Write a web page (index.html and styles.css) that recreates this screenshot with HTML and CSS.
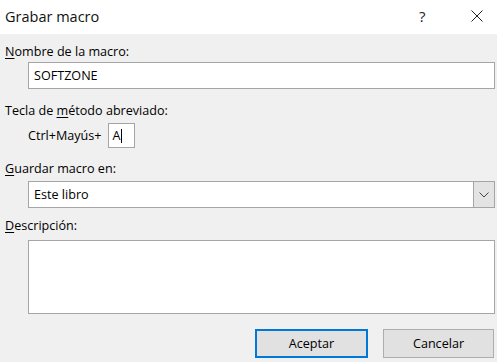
FILE: index.html
```html
<!DOCTYPE html>
<html lang="es">
<head>
<meta charset="utf-8">
<title>Grabar macro</title>
<link rel="stylesheet" href="styles.css">
</head>
<body>
<div class="dialog">
  <div class="titlebar">
    <span class="title">Grabar macro</span>
    <span class="help">?</span>
    <span class="close">
      <svg width="12" height="12" viewBox="0 0 12 12"><path d="M0.5 0.5 L11.5 11.5 M11.5 0.5 L0.5 11.5" stroke="#222" stroke-width="1" fill="none"/></svg>
    </span>
  </div>
  <div class="body">
    <div class="label l1"><u>N</u>ombre de la macro:</div>
    <div class="field input">SOFTZONE</div>
    <div class="label l2">Tecla de <u>m</u>étodo abreviado:</div>
    <div class="shortcut">
      <span class="sc-text">Ctrl+Mayús+</span>
      <span class="keybox">A<span class="caret"></span></span>
    </div>
    <div class="label l3"><u>G</u>uardar macro en:</div>
    <div class="field select">
      <span class="sel-text">Este libro</span>
      <span class="sel-btn">
        <svg width="10" height="6" viewBox="0 0 10 6"><path d="M0.5 0.5 L5 5 L9.5 0.5" stroke="#444" stroke-width="1" fill="none"/></svg>
      </span>
    </div>
    <div class="label l4"><u>D</u>escripción:</div>
    <div class="field textarea"></div>
    <div class="buttons">
      <button class="btn primary">Aceptar</button>
      <button class="btn">Cancelar</button>
    </div>
  </div>
</div>
</body>
</html>
```
FILE: styles.css
```css
html, body {
  margin: 0;
  padding: 0;
}
body {
  background: #f0f0f0;
  font-family: "Open Sans", "Noto Sans", "Liberation Sans", sans-serif;
  color: #000;
  width: 497px;
  height: 362px;
  overflow: hidden;
}
.dialog {
  display: flex;
  flex-direction: column;
}
.titlebar {
  height: 34px;
  background: #fff;
  display: flex;
  align-items: center;
  padding-left: 5px;
}
.title {
  font-size: 14.5px;
  flex: 1;
  color: #111;
  margin-top: -2px;
}
.help {
  font-size: 15px;
  color: #222;
  width: 12px;
  margin-right: 40px;
  margin-top: -2px;
}
.close {
  display: flex;
  width: 12px;
  margin-right: 14px;
  margin-top: -2px;
}
.body {
  display: flex;
  flex-direction: column;
  padding-left: 5px;
  padding-right: 2px;
}
.label {
  font-size: 12.6px;
  line-height: 16px;
  height: 16px;
}
.label u {
  text-decoration-thickness: 1px;
  text-underline-offset: 2px;
}
.l1 { margin-top: 10px; }
.l2 { margin-top: 14px; }
.l3 { margin-top: 13px; }
.l4 { margin-top: 10px; }
.field {
  margin-left: 23px;
  background: #fff;
  border: 1px solid #a5a5a5;
  box-sizing: border-box;
  font-size: 12.6px;
}
.input {
  margin-top: 2px;
  height: 27px;
  line-height: 25px;
  padding-left: 5px;
}
.shortcut {
  display: flex;
  align-items: center;
  margin-top: 4px;
  margin-left: 23px;
  height: 25px;
  font-size: 12.6px;
}
.sc-text {
  margin-right: 6px;
}
.keybox {
  width: 27px;
  height: 25px;
  box-sizing: border-box;
  border: 1px solid #a5a5a5;
  background: #fff;
  display: flex;
  align-items: center;
  padding-left: 4px;
}
.caret {
  width: 1px;
  height: 14px;
  background: #000;
  margin-left: 1px;
}
.select {
  margin-top: 4px;
  height: 27px;
  display: flex;
  align-items: stretch;
}
.sel-text {
  flex: 1;
  line-height: 25px;
  padding-left: 5px;
}
.sel-btn {
  width: 20px;
  background: #e3e3e3;
  border-left: 1px solid #a5a5a5;
  display: flex;
  align-items: center;
  justify-content: center;
}
.textarea {
  margin-top: 6px;
  height: 74px;
}
.buttons {
  display: flex;
  justify-content: flex-end;
  gap: 15px;
  margin-top: 15px;
  padding-right: 1px;
}
.btn {
  font-family: inherit;
  font-size: 12.6px;
  height: 29px;
  background: #e1e1e1;
  border: 1px solid #adadad;
  color: #000;
  padding: 0;
  width: 111px;
}
.btn.primary {
  border: 2px solid #0078d7;
  width: 113px;
}
```
